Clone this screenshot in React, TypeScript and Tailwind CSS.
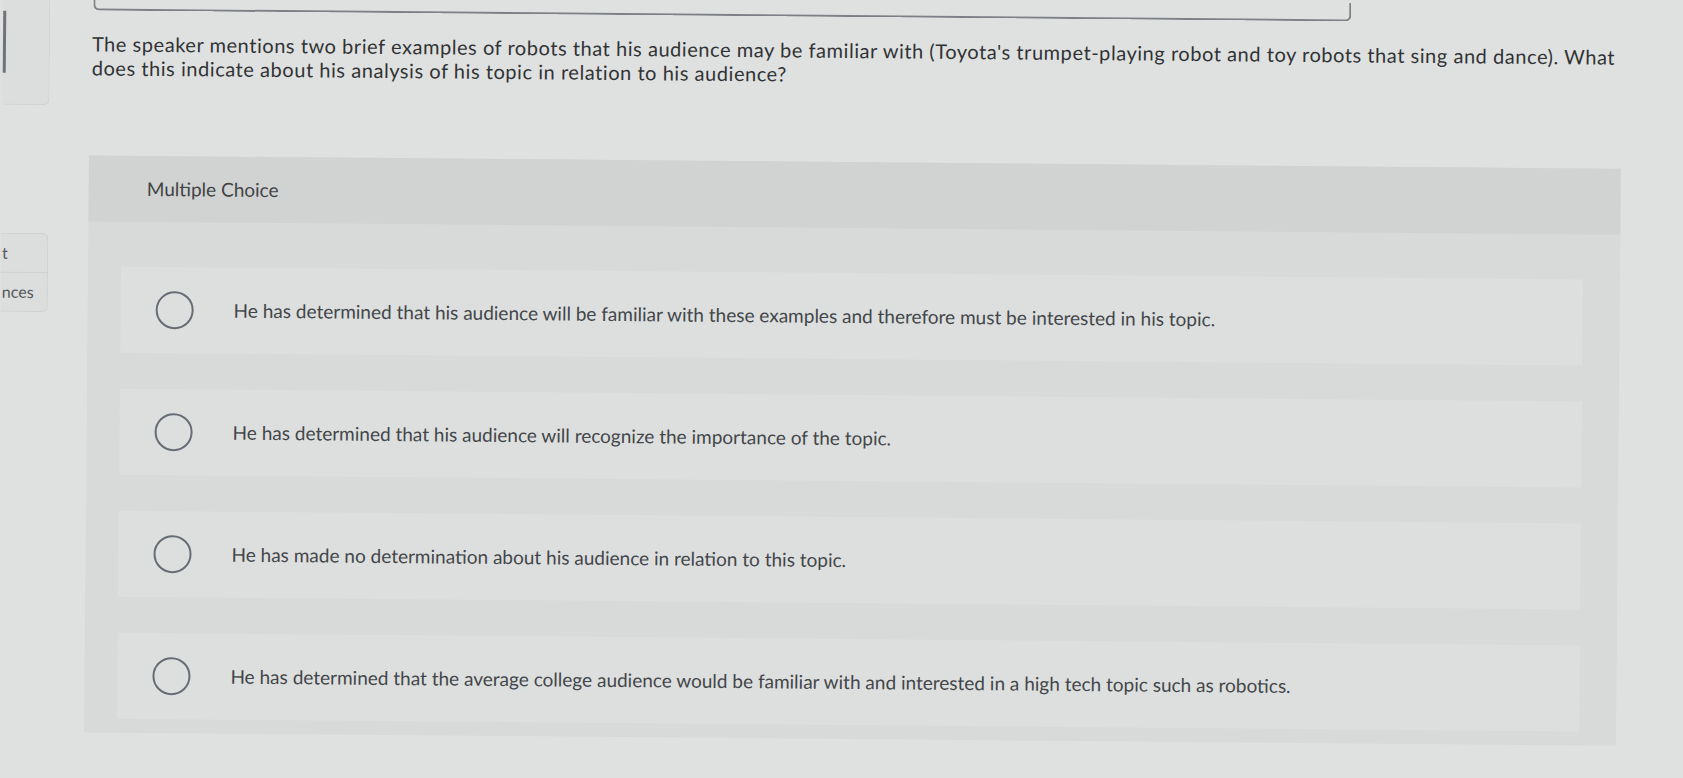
import React from "react";

const options = [
  "He has determined that his audience will be familiar with these examples and therefore must be interested in his topic.",
  "He has determined that his audience will recognize the importance of the topic.",
  "He has made no determination about his audience in relation to this topic.",
  "He has determined that the average college audience would be familiar with and interested in a high tech topic such as robotics.",
];

export default function App() {
  return (
    <div
      className="w-full h-[778px] overflow-hidden bg-[#dfe1e0]"
      style={{ fontFamily: "Lato, 'Open Sans', sans-serif" }}
    >
      <div className="w-full h-full flex flex-row rotate-[0.5deg] bg-[#dfe1e0]">
        {/* left sidebar */}
        <div className="w-[47px] shrink-0 flex flex-col">
          <div className="h-[116px] -mt-[4px] border-r border-b border-[#cfd2d1] rounded-br-md bg-[#dcdedd] flex">
            <div className="w-[3px] h-[62px] mt-[22px] bg-[#6f7478]" />
          </div>
          <div className="mt-[128px] border-r border-t border-b border-[#cfd2d1] rounded-r-md bg-[#dcdedd] flex flex-col text-[16px] text-[#555859]">
            <div className="h-[39px] flex items-center pl-[1px] border-b border-[#cfd2d1]">
              <span className="whitespace-nowrap">t</span>
            </div>
            <div className="h-[38px] flex items-center pl-[1px]">
              <span className="whitespace-nowrap">nces</span>
            </div>
          </div>
        </div>

        {/* main */}
        <div className="flex-1 flex flex-col pl-[40px]">
          <div className="ml-[3px] w-[1258px] h-[19px] -mt-[2px] border-2 border-t-0 border-[#7d8186] rounded-b-md" />

          <div className="ml-[2px] mt-[21px] text-[20px] tracking-[0.55px] leading-[24px] text-[#313335]">
            <div className="whitespace-nowrap">
              The speaker mentions two brief examples of robots that his audience may be familiar with (Toyota's trumpet-playing robot and toy robots that sing and dance). What
            </div>
            <div className="whitespace-nowrap">
              does this indicate about his analysis of his topic in relation to his audience?
            </div>
          </div>

          <div className="mt-[76px] w-[1532px] bg-[#d8dad9] flex flex-col pb-[14px]">
            <div className="h-[66px] bg-[#d1d3d2] flex items-center pl-[58px] text-[19px] text-[#414345]">
              Multiple Choice
            </div>
            <div className="mt-[45px] ml-[33px] mr-[37px] flex flex-col gap-[36px]">
              {options.map((o, i) => (
                <div
                  key={i}
                  className="h-[86px] bg-[#dddfde] flex items-center pl-[35px]"
                >
                  <div className="w-[38px] h-[38px] rounded-full border-2 border-[#676d74] shrink-0" />
                  <div className="ml-[40px] text-[19px] text-[#43464a] whitespace-nowrap">
                    {o}
                  </div>
                </div>
              ))}
            </div>
          </div>
        </div>
      </div>
    </div>
  );
}
